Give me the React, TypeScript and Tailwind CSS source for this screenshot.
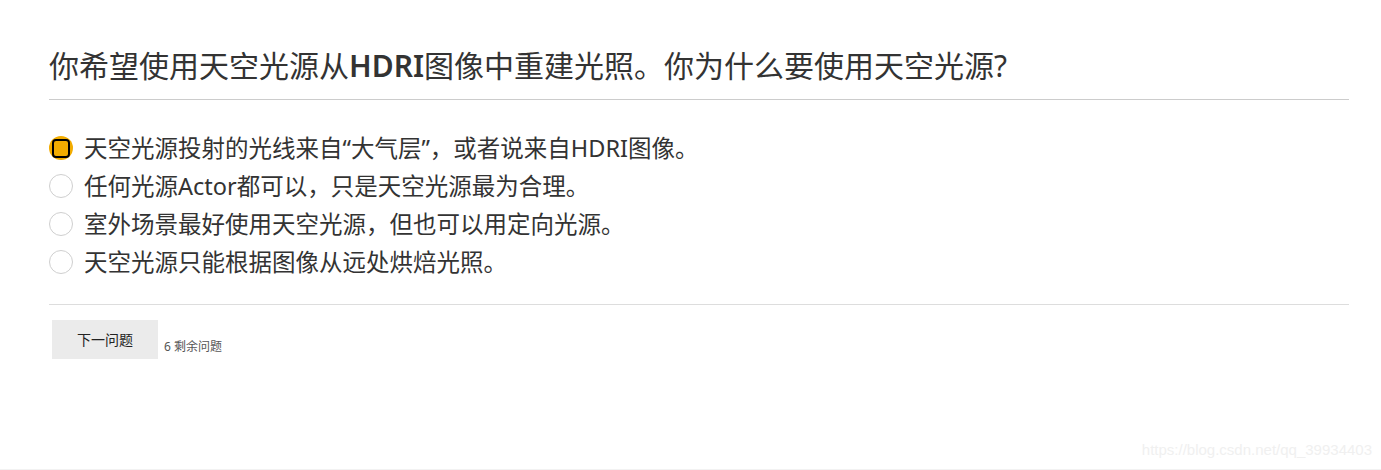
const options = [
  '天空光源投射的光线来自“大气层”，或者说来自HDRI图像。',
  '任何光源Actor都可以，只是天空光源最为合理。',
  '室外场景最好使用天空光源，但也可以用定向光源。',
  '天空光源只能根据图像从远处烘焙光照。',
]

function Radio({ checked }: { checked: boolean }) {
  if (checked) {
    return (
      <span className="relative flex h-6 w-6 shrink-0 items-center justify-center rounded-full bg-[#f2ac00]">
        <span className="h-[19px] w-[18px] rounded-[4px] border-2 border-black" />
      </span>
    )
  }
  return <span className="h-6 w-6 shrink-0 rounded-full border border-[#cfcfcf] bg-white" />
}

export default function App() {
  const selected = 0

  return (
    <div className="relative h-[470px] overflow-hidden border-b border-[#f2f2f2] bg-white font-['Noto_Sans','Noto_Sans_CJK_SC',sans-serif] text-[#333]">
      <div className="pl-[49px] pr-[32px] pt-[46px]">
        <h2 className="border-b border-[#cccccc] pb-[13px] text-[30px] leading-[40px] font-normal">
          你希望使用天空光源从<span className="font-semibold">HDRI</span>图像中重建光照。你为什么要使用天空光源?
        </h2>

        <ul className="mt-[29px] mb-[23px]">
          {options.map((o, i) => (
            <li key={i} className="flex h-[38px] items-center gap-[11px]">
              <Radio checked={i === selected} />
              <span className="text-[23.5px] leading-[30px]">{o}</span>
            </li>
          ))}
        </ul>

        <div className="border-t border-[#dddddd] pt-[15px]">
          <div className="flex items-end gap-[6px] pl-[3px]">
            <button className="h-[39px] w-[106px] bg-[#ebebeb] text-[14px] text-[#222]">下一问题</button>
            <span className="pb-[5px] text-[12px] leading-[14px] text-[#555]">6 剩余问题</span>
          </div>
        </div>
      </div>

      <div className="absolute right-[9px] bottom-[8px] font-['Liberation_Sans',sans-serif] text-[15px] text-[#f0f0f0]">
        https://blog.csdn.net/qq_39934403
      </div>
    </div>
  )
}
